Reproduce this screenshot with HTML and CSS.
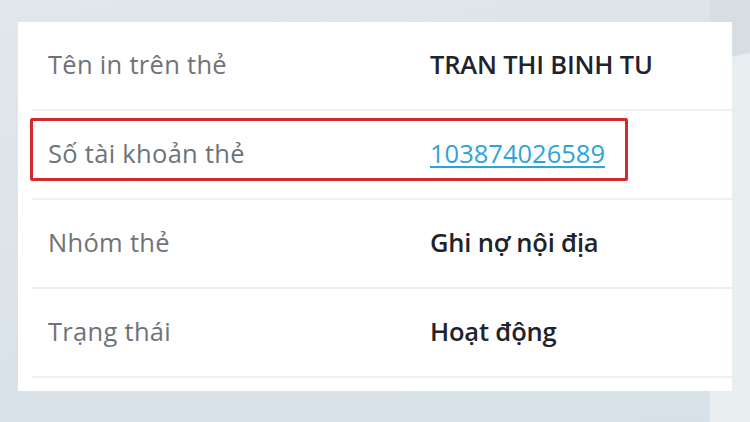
FILE: index.html
```html
<!DOCTYPE html>
<html lang="vi">
<head>
<meta charset="utf-8">
<title>Thông tin thẻ</title>
<link rel="stylesheet" href="styles.css">
</head>
<body>
<div class="page">
  <section class="card">
    <div class="row">
      <span class="label">Tên in trên thẻ</span>
      <span class="value">TRAN THI BINH TU</span>
    </div>
    <div class="row row--highlight">
      <span class="label">Số tài khoản thẻ</span>
      <a class="value link" href="#">103874026589</a>
    </div>
    <div class="row">
      <span class="label">Nhóm thẻ</span>
      <span class="value">Ghi nợ nội địa</span>
    </div>
    <div class="row">
      <span class="label">Trạng thái</span>
      <span class="value">Hoạt động</span>
    </div>
  </section>
</div>
</body>
</html>
```

FILE: styles.css
```css
html, body {
  margin: 0;
  padding: 0;
}
body {
  width: 750px;
  height: 422px;
  overflow: hidden;
  font-family: "Open Sans", "Noto Sans", sans-serif;
  background: linear-gradient(165deg, #e2e7eb 0%, #dbe3e9 50%, #d6e1e8 100%);
}
.page {
  position: relative;
  height: 422px;
  padding: 22px 18px 0 18px;
  box-sizing: border-box;
}
.page::before {
  content: "";
  position: absolute;
  right: 0;
  top: 0;
  width: 40px;
  height: 422px;
  background: linear-gradient(168deg, #d6dde3 0 14%, #e9eef1 14.5% 100%);
}
.card {
  position: relative;
  z-index: 1;
  width: 714px;
  height: 369px;
  background: #ffffff;
  box-sizing: border-box;
  padding-bottom: 11px;
}
.row {
  position: relative;
  display: grid;
  grid-template-columns: 382px 1fr;
  align-items: center;
  height: 89px;
  box-sizing: border-box;
  margin-left: 14px;
  padding-left: 16px;
  padding-bottom: 4px;
  border-bottom: 2px solid #efefef;
}
.label {
  font-size: 25.5px;
  color: #6f7378;
  letter-spacing: 0.3px;
}
.value {
  font-size: 25.5px;
  font-weight: 600;
  color: #1f232b;
  letter-spacing: -0.2px;
}
.link {
  color: #2fa3d6;
  font-weight: 500;
  letter-spacing: 0;
  text-decoration: underline;
  text-decoration-thickness: 2px;
  text-underline-offset: 3px;
}
.row--highlight::after {
  content: "";
  position: absolute;
  left: -2px;
  top: 7px;
  width: 598px;
  height: 63px;
  border: 3px solid #d42a2f;
  border-radius: 2px;
  box-sizing: border-box;
}
```
